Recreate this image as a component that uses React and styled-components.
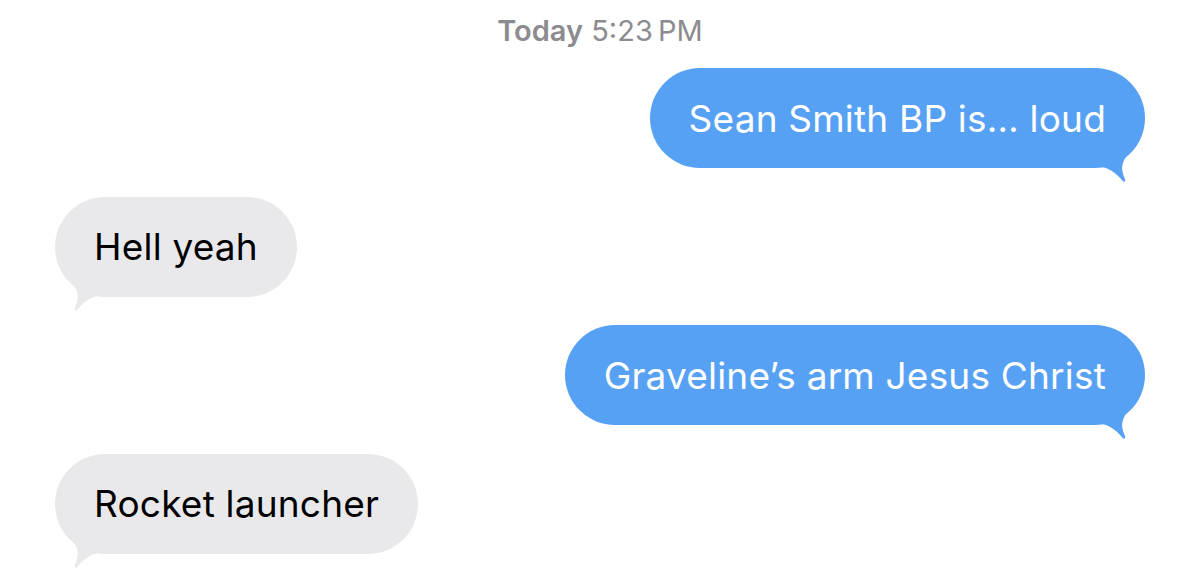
import React from 'react';
import styled, { createGlobalStyle } from 'styled-components';

const GlobalStyle = createGlobalStyle`
    body {
        margin: 0;
        background: #ffffff;
        font-family: Inter, "Noto Sans", "Liberation Sans", sans-serif;
        -webkit-font-smoothing: antialiased;
    }
`

const messages = [
    { from: 'me', text: 'Sean Smith BP is\u2026 loud' },
    { from: 'them', text: 'Hell yeah' },
    { from: 'me', text: 'Graveline\u2019s arm Jesus Christ' },
    { from: 'them', text: 'Rocket launcher' },
];

const Tail = ({ color, side }) => (
    <TailSvg side={side} width="50" height="52" viewBox="0 0 50 52">
        <path
            d="M0 33 C12 33 21 40 26 46 C28 49 31 50 30 46 C26 36 24 28 41 13 L44 0 L0 0 Z"
            fill={color}
        />
    </TailSvg>
)

const App = () => {
    return (
        <>
            <GlobalStyle />
            <Thread>
                <Stamp><b>Today</b> 5:23&#8201;PM</Stamp>
                {messages.map((msg, index) => {
                    const mine = msg.from === 'me'
                    return (
                        <Row key={index} mine={mine}>
                            <Bubble mine={mine}>
                                {msg.text}
                                <Tail side={mine ? 'right' : 'left'} color={mine ? '#57a1f5' : '#e9e9eb'} />
                            </Bubble>
                        </Row>
                    )
                })}
            </Thread>
        </>
    )
}

export default App

const Thread = styled.div`
    width: 1200px;
    height: 576px;
    box-sizing: border-box;
    padding: 14px 55px 0;
    display: flex;
    flex-direction: column;
    gap: 28.5px;
    overflow: hidden;
`

const Stamp = styled.div`
    text-align: center;
    font-size: 29px;
    line-height: 34px;
    color: #8c8c90;
    margin-bottom: -8.5px;

    b {
        font-weight: 600;
    }
`

const Row = styled.div`
    display: flex;
    justify-content: ${props => props.mine ? 'flex-end' : 'flex-start'};
`

const Bubble = styled.div`
    position: relative;
    height: 100px;
    box-sizing: border-box;
    padding: 0 39px;
    border-radius: 50px;
    display: flex;
    align-items: center;
    font-size: 37px;
    letter-spacing: 0.2px;
    white-space: nowrap;
    color: ${props => props.mine ? '#ffffff' : '#000000'};
    background: ${props => props.mine ? '#57a1f5' : '#e9e9eb'};
`

const TailSvg = styled.svg`
    position: absolute;
    bottom: -17px;
    ${props => props.side === 'right' ? 'right: 0;' : 'left: 0; transform: scaleX(-1);'}
`
